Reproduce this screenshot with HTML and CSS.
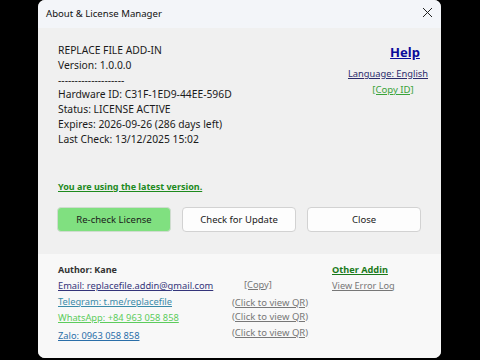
FILE: index.html
```html
<!DOCTYPE html>
<html>
<head>
<meta charset="utf-8">
<link rel="stylesheet" href="styles.css">
</head>
<body>
<div class="window">
  <div class="titlebar">
    <span class="title">About &amp; License Manager</span>
    <svg class="close" width="11" height="11" viewBox="0 0 11 11"><path d="M1 1 L10 10 M10 1 L1 10" stroke="#222" stroke-width="1" fill="none"/></svg>
  </div>
  <div class="main">
    <div class="info">
      <div>REPLACE FILE ADD-IN</div>
      <div>Version: 1.0.0.0</div>
      <div>--------------------</div>
      <div>Hardware ID: C31F-1ED9-44EE-596D</div>
      <div>Status: LICENSE ACTIVE</div>
      <div>Expires: 2026-09-26 (286 days left)</div>
      <div>Last Check: 13/12/2025 15:02</div>
    </div>
    <div class="side">
      <a class="help">Help</a>
      <a class="lang">Language: English</a>
      <a class="copyid">[Copy ID]</a>
    </div>
  </div>
  <div class="status"><a>You are using the latest version.</a></div>
  <div class="buttons">
    <button class="btn btn-green">Re-check License</button>
    <button class="btn">Check for Update</button>
    <button class="btn">Close</button>
  </div>
  <div class="footer">
    <div class="contacts">
      <div class="author">Author: Kane</div>
      <div class="row"><a class="email">Email: replacefile.addin@gmail.com</a></div>
      <div class="row"><a class="tele">Telegram: t.me/replacefile</a></div>
      <div class="row"><a class="whats">WhatsApp: +84 963 058 858</a></div>
      <div class="row zrow"><a class="zalo">Zalo: 0963 058 858</a></div>
    </div>
    <div class="actions">
      <div class="spacer"></div>
      <div class="row"><a class="gray copy">[Copy]</a></div>
      <div class="row qr1"><a class="gray">(Click to view QR)</a></div>
      <div class="row qr2"><a class="gray">(Click to view QR)</a></div>
      <div class="row qr3"><a class="gray">(Click to view QR)</a></div>
    </div>
    <div class="more">
      <a class="other">Other Addin</a>
      <a class="gray">View Error Log</a>
    </div>
  </div>
</div>
</body>
</html>
```

FILE: styles.css
```css
html, body {
  margin: 0;
  padding: 0;
  background: #000;
  width: 480px;
  height: 360px;
  overflow: hidden;
}
body {
  font-family: "Noto Sans", "Open Sans", sans-serif;
  font-size: 10.3px;
  color: #1a1a1a;
}
a { text-decoration: underline; cursor: pointer; }
.window {
  margin-left: 38px;
  width: 403px;
  height: 358px;
  background: #f0f0f0;
  border-radius: 7px;
  overflow: hidden;
  display: flex;
  flex-direction: column;
}
.titlebar {
  height: 28px;
  flex: none;
  background: #f3f5f9;
  display: flex;
  align-items: center;
  justify-content: space-between;
  padding: 0 8px 0 8px;
}
.title { font-size: 9.6px; color: #111; margin-top: -2px; }
.close { margin-right: 0; margin-top: -3px; }
.main {
  display: flex;
  justify-content: space-between;
  padding: 15px 13px 0 20px;
}
.info div { line-height: 14.8px; height: 14.8px; white-space: nowrap; }
.side {
  display: flex;
  flex-direction: column;
  align-items: center;
}
.help { font-weight: bold; font-size: 13px; color: #0a0a9a; line-height: 18px; height: 18px; margin-left: 34px; }
.lang { color: #2b2b6b; font-size: 9.3px; margin-top: 6px; line-height: 14px; height: 14px; }
.copyid { color: #3aa33a; font-size: 9.6px; margin-top: 2px; line-height: 14px; height: 14px; margin-left: 10px; }
.status { padding: 32px 0 0 20px; line-height: 14px; height: 14px; }
.status a { color: #1d8a1d; font-weight: bold; font-size: 9px; }
.buttons {
  display: flex;
  gap: 11px;
  padding: 14px 0 0 19px;
}
.btn {
  width: 114px;
  height: 25px;
  border: 1px solid #d2d2d2;
  border-radius: 4px;
  background: #fdfdfd;
  font-family: "Noto Sans", "Open Sans", sans-serif;
  font-size: 9.5px;
  color: #1a1a1a;
  padding: 0;
}
.btn-green { background: #80e080; border-color: #cfdccf; }
.footer {
  margin-top: 22px;
  flex: 1;
  background: #f8f8f8;
  display: flex;
  padding: 8px 0 0 20px;
  font-size: 9.3px;
}
.contacts { width: 174px; }
.author { font-weight: bold; font-size: 9px; color: #333; line-height: 16px; height: 16px; }
.row { line-height: 16px; height: 16px; white-space: nowrap; }
.zrow { margin-top: 2px; }
.email { color: #34347a; }
.tele { color: #3a8aa8; }
.whats { color: #5ccc5c; }
.zalo { color: #2a6ea8; }
.gray { color: #777; }
.actions { width: 100px; font-size: 9.5px; }
.spacer { height: 15px; }
.copy { margin-left: 12px; font-size: 9.3px; }
.qr1 { margin-top: 2px; }
.qr2 { margin-top: -2px; }
.qr3 { margin-top: 0; }
.more { display: flex; flex-direction: column; font-size: 9.2px; }
.other { color: #1a7a1a; font-weight: bold; line-height: 16px; height: 16px; }
.more .gray { line-height: 16px; }
```
